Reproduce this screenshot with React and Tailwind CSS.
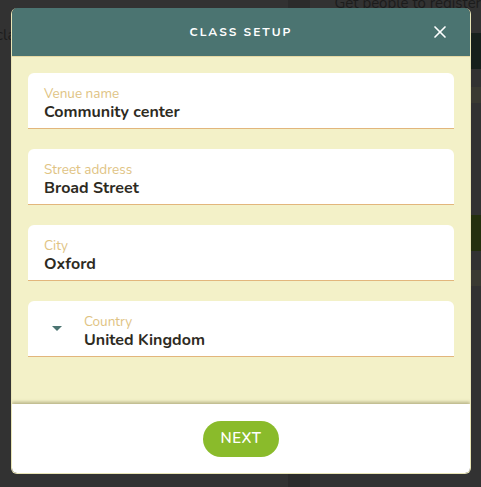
import { X } from 'lucide-react';

const font = { fontFamily: 'Nunito, Lato, "Open Sans", sans-serif' };

function Field({ label, value, select }) {
  return (
    <div className="h-[56px] bg-white rounded-t-[6px] border-b border-[#e2b67c] flex items-center">
      {select && (
        <div className="w-[56px] flex justify-center pl-[2px]">
          <div className="w-0 h-0 border-l-[5px] border-r-[5px] border-t-[5px] border-l-transparent border-r-transparent border-t-[#4b7471]" />
        </div>
      )}
      <div className={select ? 'pt-[6px]' : 'pl-[16px] pt-[6px]'}>
        <div className="text-[13.5px] leading-[16px] text-[#e0c383]">{label}</div>
        <div className="text-[16px] leading-[20px] font-bold text-[#2e2b1f]">{value}</div>
      </div>
    </div>
  );
}

export default function App() {
  return (
    <div className="relative w-[481px] h-[487px] bg-[#323232] overflow-hidden" style={font}>
      {/* page behind the overlay */}
      <div className="absolute inset-0 flex">
        <div className="w-[302px] pt-[24px]">
          <div className="text-[15px] text-[#1c1c1c] -ml-[4px]">cla</div>
        </div>
        <div className="w-[24px] bg-[#2b2b2b]" />
        <div className="flex-1 flex flex-col">
          <div className="h-[33px] -mt-[8px] pl-[24px] text-[15px] text-[#1c1c1c] whitespace-nowrap">Get people to register</div>
          <div className="h-[36px] bg-[#16201c] mt-[8px]" />
          <div className="h-[16px] bg-[#3a3a32] mt-[18px]" />
          <div className="h-[36px] bg-[#24300e] mt-[112px]" />
          <div className="h-[16px] bg-[#3a3a32] mt-[19px]" />
        </div>
      </div>

      <div className="absolute left-[11px] top-[8px] w-[460px] rounded-[6px] overflow-hidden border border-[#e9e5b6] border-t-0">
        <div className="h-[48px] bg-[#4b7471] flex items-center justify-center relative">
          <span className="text-white text-[12px] font-bold tracking-[2px]">CLASS SETUP</span>
          <X className="absolute right-[20px] top-[14px] w-[20px] h-[20px] text-white" strokeWidth={2} />
        </div>
        <div className="bg-[#f3f1c8] border-t border-[#e6d9a4] px-[16px] pt-[16px] pb-[47px] flex flex-col gap-[20px]">
          <Field label="Venue name" value="Community center" />
          <Field label="Street address" value="Broad Street" />
          <Field label="City" value="Oxford" />
          <Field label="Country" value="United Kingdom" select />
        </div>
        <div className="bg-white h-[69px] flex items-center justify-center shadow-[0_-2px_3px_rgba(80,70,20,0.35)] relative">
          <button className="w-[76px] h-[36px] rounded-full bg-[#8abb2b] text-white text-[15px] font-semibold tracking-[0.5px]">
            NEXT
          </button>
        </div>
      </div>
    </div>
  );
}
